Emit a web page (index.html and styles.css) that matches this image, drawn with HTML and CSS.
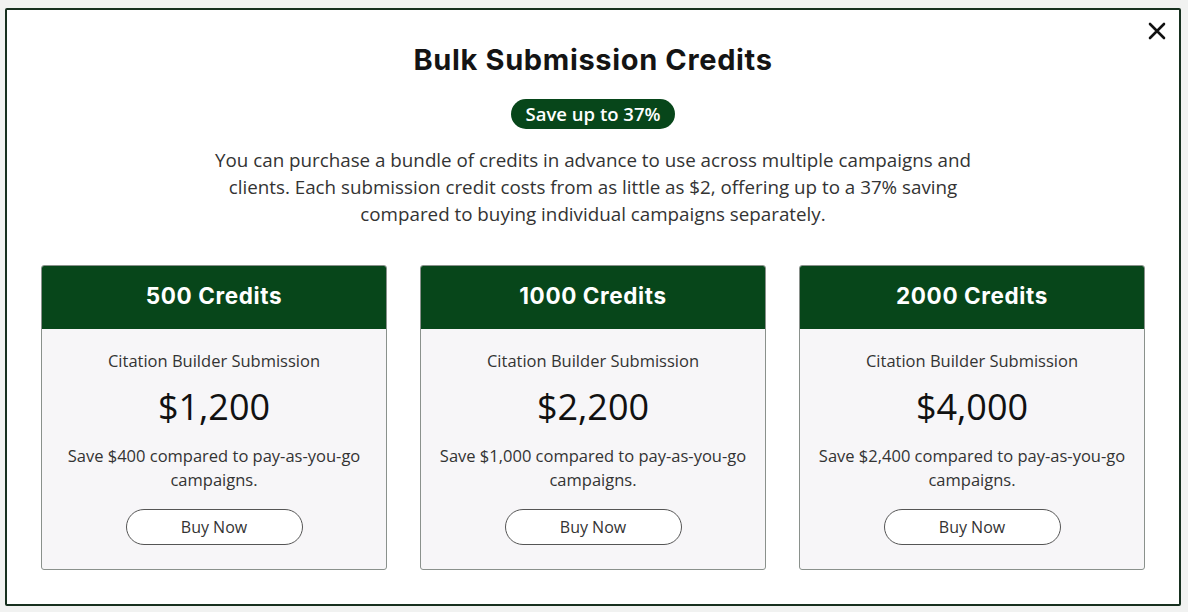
FILE: index.html
```html
<!DOCTYPE html>
<html lang="en">
<head>
<meta charset="utf-8">
<title>Bulk Submission Credits</title>
<link rel="stylesheet" href="styles.css">
</head>
<body>
<div class="modal">
  <button class="close" aria-label="Close">
    <svg width="18" height="18" viewBox="0 0 18 18"><path d="M2 2 L16 16 M16 2 L2 16" stroke="#111" stroke-width="2.6" stroke-linecap="round"/></svg>
  </button>
  <h1 class="title">Bulk Submission Credits</h1>
  <div class="badge-row"><span class="badge">Save up to 37%</span></div>
  <p class="intro">You can purchase a bundle of credits in advance to use across multiple campaigns and clients. Each submission credit costs from as little as $2, offering up to a 37% saving compared to buying individual campaigns separately.</p>
  <div class="cards">
    <div class="card">
      <div class="card-head">500 Credits</div>
      <div class="card-body">
        <div class="card-sub">Citation Builder Submission</div>
        <div class="price">$1,200</div>
        <div class="save">Save $400 compared to pay-as-you-go campaigns.</div>
        <button class="buy">Buy Now</button>
      </div>
    </div>
    <div class="card">
      <div class="card-head">1000 Credits</div>
      <div class="card-body">
        <div class="card-sub">Citation Builder Submission</div>
        <div class="price">$2,200</div>
        <div class="save">Save $1,000 compared to pay-as-you-go campaigns.</div>
        <button class="buy">Buy Now</button>
      </div>
    </div>
    <div class="card">
      <div class="card-head">2000 Credits</div>
      <div class="card-body">
        <div class="card-sub">Citation Builder Submission</div>
        <div class="price">$4,000</div>
        <div class="save">Save $2,400 compared to pay-as-you-go campaigns.</div>
        <button class="buy">Buy Now</button>
      </div>
    </div>
  </div>
</div>
</body>
</html>
```

FILE: styles.css
```css
html, body {
  margin: 0;
  padding: 0;
}
body {
  background: #f1f2f1;
  font-family: "Open Sans", "Noto Sans", sans-serif;
  width: 1188px;
  height: 612px;
  overflow: hidden;
}
.modal {
  position: relative;
  box-sizing: border-box;
  margin: 8px 0 0 5px;
  width: 1176px;
  height: 598px;
  background: #fff;
  border: 2px solid #17301f;
  border-radius: 2px;
  padding: 32px 34px 0 34px;
}
.close {
  position: absolute;
  top: 9px;
  right: 10px;
  width: 24px;
  height: 24px;
  padding: 3px;
  border: 0;
  background: none;
  display: flex;
  align-items: center;
  justify-content: center;
}
.title {
  margin: 0;
  text-align: center;
  font-family: "Inter", "Noto Sans", sans-serif;
  font-weight: 700;
  font-size: 29px;
  line-height: 36px;
  color: #141414;
  letter-spacing: 0.65px;
}
.badge-row {
  display: flex;
  justify-content: center;
  margin-top: 21px;
}
.badge {
  display: inline-block;
  height: 30px;
  line-height: 30px;
  padding: 0 15px;
  border-radius: 15px;
  background: #07461a;
  color: #fff;
  font-weight: 600;
  font-size: 18.5px;
}
.intro {
  margin: 18px auto 0;
  width: 780px;
  text-align: center;
  font-size: 18.8px;
  line-height: 27px;
  color: #333;
}
.cards {
  display: flex;
  gap: 33px;
  margin-top: 37px;
}
.card {
  width: 346px;
  box-sizing: border-box;
  border: 1px solid #8a918c;
  border-radius: 3px;
  overflow: hidden;
  background: #f7f6f8;
}
.card-head {
  height: 63px;
  padding-bottom: 4px;
  box-sizing: border-box;
  background: #07461a;
  color: #fff;
  display: flex;
  align-items: center;
  justify-content: center;
  font-family: "Inter", "Noto Sans", sans-serif;
  font-weight: 700;
  font-size: 22.5px;
  letter-spacing: 0.6px;
}
.card-body {
  display: flex;
  flex-direction: column;
  align-items: center;
  padding: 20px 8px 24px;
  text-align: center;
}
.card-sub {
  font-size: 16.5px;
  line-height: 24px;
  color: #333;
}
.price {
  margin-top: 12px;
  font-size: 36px;
  font-weight: 500;
  line-height: 44px;
  color: #111;
}
.save {
  margin-top: 15px;
  font-size: 16.5px;
  line-height: 24px;
  color: #333;
  max-width: 320px;
}
.buy {
  margin-top: 17px;
  width: 177px;
  height: 36px;
  border: 1px solid #555;
  border-radius: 18px;
  background: #fff;
  font-family: "Open Sans", "Noto Sans", sans-serif;
  font-size: 16px;
  color: #333;
}
```
